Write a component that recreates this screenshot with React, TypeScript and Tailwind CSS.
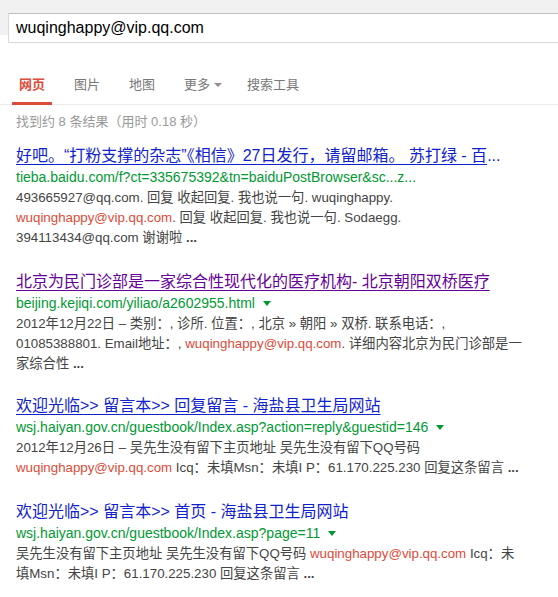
import React from "react";

const FONT = '"Liberation Sans", Arial, "Noto Sans CJK SC", sans-serif';

function Red({ children }: { children: React.ReactNode }) {
  return <span className="text-[#dd4b39]">{children}</span>;
}

function Arrow() {
  return (
    <span className="ml-[8px] inline-block h-0 w-0 border-x-[4px] border-t-[5px] border-x-transparent border-t-[#093] align-middle" />
  );
}

function Result({
  title,
  after,
  color,
  underline,
  url,
  arrow,
  lines,
  gap,
}: {
  title: string;
  after?: string;
  color: string;
  underline: boolean;
  url: string;
  arrow: boolean;
  lines: React.ReactNode[];
  gap: string;
}) {
  return (
    <div className={gap}>
      <div className={`h-[22px] whitespace-nowrap text-[16px] leading-[22px] ${color}`}>
        <span className={underline ? "underline underline-offset-[3px]" : ""}>{title}</span>
        {after && <span>{after}</span>}
      </div>
      <div className="flex h-[20px] items-center whitespace-nowrap text-[14px] leading-[20px] text-[#093]">
        <span>{url}</span>
        {arrow && <Arrow />}
      </div>
      <div className="mt-[1px] text-[13.3px] leading-[20px] text-[#444]">
        {lines.map((l, i) => (
          <div key={i} className="h-[20px] whitespace-nowrap">
            {l}
          </div>
        ))}
      </div>
    </div>
  );
}

export default function App() {
  return (
    <div className="h-[597px] w-[558px] overflow-hidden bg-white" style={{ fontFamily: FONT }}>
      <div className="bg-[linear-gradient(to_bottom,#f1f1f1_35px,#ffffff_35px)] pl-[8px] pt-[13px]">
        <div className="flex h-[30px] w-[580px] items-center border border-[#d9d9d9] border-t-[#c0c0c0] bg-white pl-[7px] text-[16px] text-black">
          wuqinghappy@vip.qq.com
        </div>
      </div>

      <div className="mt-[32px] flex border-b border-[#ebebeb] text-[13px] text-[#777]">
        <div className="ml-[12px] flex flex-col">
          <div className="px-[7px] leading-[20px] font-bold text-[#dd4b39]">网页</div>
          <div className="mt-[7px] -mb-px h-[3px] w-[40px] bg-[#dd4b39]" />
        </div>
        <div className="ml-[15px] px-[7px] leading-[20px]">图片</div>
        <div className="ml-[15px] px-[7px] leading-[20px]">地图</div>
        <div className="ml-[15px] flex h-[20px] items-center px-[7px] leading-[20px]">
          更多
          <span className="ml-[4px] inline-block h-0 w-0 border-x-[4px] border-t-[4px] border-x-transparent border-t-[#909090]" />
        </div>
        <div className="ml-[11px] px-[7px] leading-[20px]">搜索工具</div>
      </div>

      <div className="ml-[16px] mt-[7px] h-[20px] text-[13px] leading-[20px] text-[#999]">
        找到约 8 条结果（用时 0.18 秒）
      </div>

      <div className="ml-[16px] mt-[13px]">
        <Result
          gap="mb-[23px]"
          title="好吧。“打粉支撑的杂志”《相信》27日发行，请留邮箱。 苏打绿 - 百"
          after="..."
          color="text-[#12c]"
          underline
          url="tieba.baidu.com/f?ct=335675392&tn=baiduPostBrowser&sc...z..."
          arrow={false}
          lines={[
            <>493665927@qq.com. 回复 收起回复. 我也说一句. wuqinghappy.</>,
            <>
              <Red>wuqinghappy@vip.qq.com</Red>. 回复 收起回复. 我也说一句. Sodaegg.
            </>,
            <>
              394113434@qq.com 谢谢啦 <b>...</b>
            </>,
          ]}
        />
        <Result
          gap="mb-[21px]"
          title="北京为民门诊部是一家综合性现代化的医疗机构- 北京朝阳双桥医疗"
          color="text-[#609]"
          underline
          url="beijing.kejiqi.com/yiliao/a2602955.html"
          arrow
          lines={[
            <>2012年12月22日 – 类别：, 诊所. 位置：, 北京 » 朝阳 » 双桥. 联系电话：,</>,
            <>
              01085388801. Email地址：, <Red>wuqinghappy@vip.qq.com</Red>. 详细内容北京为民门诊部是一
            </>,
            <>
              家综合性 <b>...</b>
            </>,
          ]}
        />
        <Result
          gap="mb-[23px]"
          title="欢迎光临>> 留言本>> 回复留言 - 海盐县卫生局网站"
          color="text-[#12c]"
          underline
          url="wsj.haiyan.gov.cn/guestbook/Index.asp?action=reply&guestid=146"
          arrow
          lines={[
            <>2012年12月26日 – 吴先生没有留下主页地址 吴先生没有留下QQ号码</>,
            <>
              <Red>wuqinghappy@vip.qq.com</Red> Icq：未填Msn：未填I P：61.170.225.230 回复这条留言 <b>...</b>
            </>,
          ]}
        />
        <Result
          gap="mb-[21px]"
          title="欢迎光临>> 留言本>> 首页 - 海盐县卫生局网站"
          color="text-[#12c]"
          underline={false}
          url="wsj.haiyan.gov.cn/guestbook/Index.asp?page=11"
          arrow
          lines={[
            <>
              吴先生没有留下主页地址 吴先生没有留下QQ号码 <Red>wuqinghappy@vip.qq.com</Red> Icq：未
            </>,
            <>
              填Msn：未填I P：61.170.225.230 回复这条留言 <b>...</b>
            </>,
          ]}
        />
      </div>
    </div>
  );
}
